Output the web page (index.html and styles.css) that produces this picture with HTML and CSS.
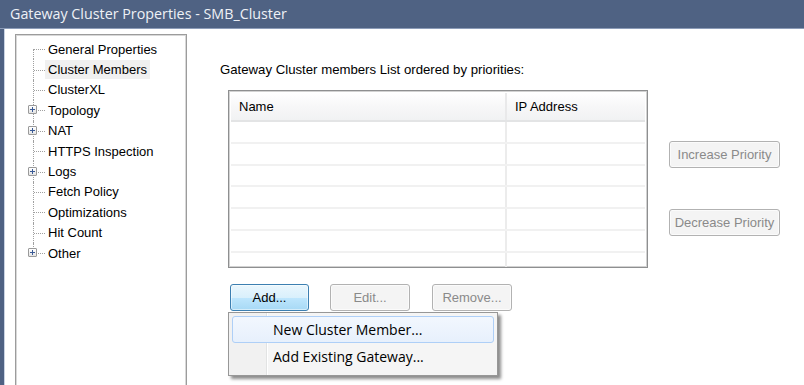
FILE: index.html
```html
<!DOCTYPE html>
<html>
<head>
<meta charset="utf-8">
<link rel="stylesheet" href="styles.css">
</head>
<body>
<div class="window">
  <div class="titlebar">Gateway Cluster Properties - SMB_Cluster</div>
  <div class="client">
    <div class="tree">
      <ul class="tree-list">
        <li class="node first"><span class="gutter"></span><span class="label">General Properties</span></li>
        <li class="node"><span class="gutter"></span><span class="label selected">Cluster Members</span></li>
        <li class="node"><span class="gutter"></span><span class="label">ClusterXL</span></li>
        <li class="node"><span class="gutter"><span class="plus"></span></span><span class="label">Topology</span></li>
        <li class="node"><span class="gutter"><span class="plus"></span></span><span class="label">NAT</span></li>
        <li class="node"><span class="gutter"></span><span class="label">HTTPS Inspection</span></li>
        <li class="node"><span class="gutter"><span class="plus"></span></span><span class="label">Logs</span></li>
        <li class="node"><span class="gutter"></span><span class="label">Fetch Policy</span></li>
        <li class="node"><span class="gutter"></span><span class="label">Optimizations</span></li>
        <li class="node"><span class="gutter"></span><span class="label">Hit Count</span></li>
        <li class="node last"><span class="gutter"><span class="plus"></span></span><span class="label">Other</span></li>
      </ul>
    </div>
    <div class="main">
      <div class="caption">Gateway Cluster members List ordered by priorities:</div>
      <div class="list-area">
        <div class="grid">
          <div class="grid-head">
            <div class="col col-name">Name</div>
            <div class="col col-ip">IP Address</div>
          </div>
          <div class="grid-row"><div class="col col-name"></div><div class="col col-ip"></div></div>
          <div class="grid-row"><div class="col col-name"></div><div class="col col-ip"></div></div>
          <div class="grid-row"><div class="col col-name"></div><div class="col col-ip"></div></div>
          <div class="grid-row"><div class="col col-name"></div><div class="col col-ip"></div></div>
          <div class="grid-row"><div class="col col-name"></div><div class="col col-ip"></div></div>
          <div class="grid-row"><div class="col col-name"></div><div class="col col-ip"></div></div>
          <div class="grid-row last-row"><div class="col col-name"></div><div class="col col-ip"></div></div>
        </div>
        <div class="side-buttons">
          <button class="btn disabled wide">Increase Priority</button>
          <button class="btn disabled wide">Decrease Priority</button>
        </div>
      </div>
      <div class="button-row">
        <button class="btn active">Add...</button>
        <button class="btn disabled">Edit...</button>
        <button class="btn disabled">Remove...</button>
        <div class="menu">
          <div class="menu-item hot">New Cluster Member...</div>
          <div class="menu-item">Add Existing Gateway...</div>
        </div>
      </div>
    </div>
  </div>
</div>
</body>
</html>
```

FILE: styles.css
```css
html, body {
  margin: 0;
  padding: 0;
  background: #ffffff;
}

.window {
  width: 804px;
  height: 385px;
  overflow: hidden;
  display: flex;
  flex-direction: column;
  font-family: "Liberation Sans", Arial, sans-serif;
  color: #000;
}

.titlebar {
  height: 29px;
  flex: 0 0 29px;
  box-sizing: border-box;
  background: #4f6283;
  border-bottom: 1px solid #8c9cb8;
  color: #eef1f6;
  font-family: "Open Sans", "Noto Sans", sans-serif;
  font-size: 14.3px;
  line-height: 28px;
  padding-left: 10px;
}

.client {
  flex: 1;
  display: flex;
  align-items: flex-start;
  border-left: 4px solid #4f6283;
  box-shadow: inset 1px 0 0 #c9d3e3;
  background: #fff;
  min-height: 0;
}

/* Tree */
.tree {
  margin-left: 11px;
  margin-top: 5px;
  width: 172px;
  height: 380px;
  box-sizing: border-box;
  border: 1px solid #9c9c9c;
  box-shadow: inset 1px 1px 0 #d8d8d8, inset -1px 0 0 #d8d8d8;
  background: #fff;
  flex: 0 0 auto;
}

.tree-list {
  list-style: none;
  margin: 0;
  padding: 4px 0 0 11px;
}

.node {
  display: flex;
  align-items: center;
  height: 20.4px;
  font-size: 13px;
}

.gutter {
  position: relative;
  width: 18px;
  height: 100%;
  flex: 0 0 18px;
}

.gutter::before {
  content: "";
  position: absolute;
  left: 6px;
  top: 0;
  bottom: 0;
  border-left: 1px dotted #a0a0a0;
}

.node.first .gutter::before {
  top: 50%;
}

.node.last .gutter::before {
  bottom: 50%;
}

.gutter::after {
  content: "";
  position: absolute;
  left: 7px;
  width: 11px;
  top: 50%;
  border-top: 1px dotted #a0a0a0;
}

.plus {
  position: absolute;
  left: 1px;
  top: 50%;
  margin-top: -5px;
  width: 9px;
  height: 9px;
  box-sizing: border-box;
  border: 1px solid #9a9a9a;
  border-radius: 1px;
  background: linear-gradient(#ffffff, #e4e4e4);
  z-index: 1;
}

.plus::before,
.plus::after {
  content: "";
  position: absolute;
  background: #3a5a95;
}

.plus::before {
  left: 1px;
  right: 1px;
  top: 3px;
  height: 1px;
}

.plus::after {
  top: 1px;
  bottom: 1px;
  left: 3px;
  width: 1px;
}

.label {
  padding: 1px 3px;
  line-height: 17px;
  white-space: nowrap;
}

.label.selected {
  background: #f0f0f0;
}

/* Main pane */
.main {
  margin-left: 33px;
  padding-top: 33px;
  display: flex;
  flex-direction: column;
  position: relative;
}

.caption {
  font-size: 13.2px;
  line-height: 16px;
  height: 16px;
  margin-bottom: 12px;
  white-space: nowrap;
}

.list-area {
  display: flex;
  align-items: flex-start;
  margin-left: 8px;
}

.grid {
  width: 420px;
  height: 178px;
  box-sizing: border-box;
  border: 1px solid #8e8f90;
  box-shadow: inset 0 0 0 1px #d2d2d2;
  padding: 2px;
  overflow: hidden;
}

.grid-head {
  display: flex;
  height: 29px;
  box-sizing: border-box;
  background: linear-gradient(#ffffff, #f7f7f8 50%, #f1f2f3);
  border-bottom: 2px solid #e3e4e5;
  font-size: 13px;
}

.grid-head .col {
  line-height: 27px;
  padding-left: 8px;
}

.col-name {
  width: 276px;
  box-sizing: border-box;
  border-right: 2px solid #ececec;
}

.col-ip {
  flex: 1;
}

.grid-head .col-name {
  border-right: 2px solid #e9e9ea;
}

.grid-row {
  display: flex;
  height: 21.8px;
  box-sizing: border-box;
  border-bottom: 2px solid #f1f1f1;
}

.grid-row.last-row {
  border-bottom: none;
}

.side-buttons {
  display: flex;
  flex-direction: column;
  gap: 41px;
  margin-left: 21px;
  margin-top: 51px;
}

.btn {
  font-family: "Liberation Sans", Arial, sans-serif;
  font-size: 13px;
  height: 27px;
  width: 80px;
  box-sizing: border-box;
  border-radius: 3px;
  padding: 0;
  margin: 0;
  color: #000;
}

.btn.wide {
  width: 111px;
}

.btn.disabled {
  border: 1px solid #b2b2b2;
  background: #f4f4f4;
  color: #8a8a8a;
  box-shadow: inset 0 0 0 1px #fbfbfb;
}

.btn.active {
  border: 1px solid #3c7fb1;
  background: linear-gradient(#eaf6fd 0%, #d9f0fc 50%, #bee6fd 51%, #a7d9f5 100%);
  box-shadow: inset 0 0 0 1px #ffffff80;
  width: 79px;
}

.button-row {
  display: flex;
  gap: 21px;
  margin-left: 10px;
  margin-top: 16px;
  position: relative;
}

.button-row .btn:nth-child(3) {
  margin-left: 1px;
}

.menu {
  position: absolute;
  left: -2px;
  top: 28px;
  width: 270px;
  height: 64px;
  box-sizing: border-box;
  border: 1px solid #979797;
  background: linear-gradient(to right, #f1f1f1 0, #f1f1f1 37px, #e2e3e3 37px, #e2e3e3 38px, #ffffff 38px, #ffffff 39px, #f5f5f5 39px);
  box-shadow: 3px 3px 3px rgba(0, 0, 0, 0.45);
  padding: 3px 3px;
  font-family: "Open Sans", "Noto Sans", sans-serif;
  font-size: 14px;
  z-index: 2;
}

.menu-item {
  height: 27px;
  line-height: 26px;
  box-sizing: border-box;
  padding-left: 40px;
  border: 1px solid transparent;
  border-radius: 3px;
}

.menu-item.hot {
  border-color: #aecff7;
  background: linear-gradient(#f2f7fe, #e7f0fc);
}
```
